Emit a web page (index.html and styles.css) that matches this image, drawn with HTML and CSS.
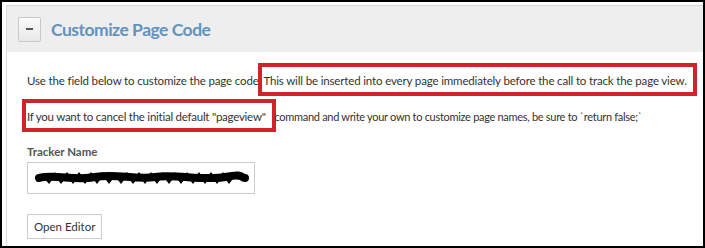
FILE: index.html
```html
<!DOCTYPE html>
<html lang="en">

<head>
    <meta charset="UTF-8">
    <title>Customize Page Code</title>
    <link rel="stylesheet" href="styles.css">
</head>

<body>
    <div class="frame">
        <div class="panel">
            <div class="panel-header">
                <button class="collapse" aria-label="Collapse"><span class="minus"></span></button>
                <h2>Customize Page Code</h2>
            </div>

            <div class="panel-body">
                <p class="note">Use the field below to customize the page code <span class="mark mark-first">This will be inserted into every page immediately before the call to track the page view.</span></p>
                <p class="note"><span class="mark mark-second">If you want to cancel the initial default "pageview"</span> <span class="tail">command and write your own to customize page names, be sure to `return false;`</span></p>

                <label for="tracker">Tracker Name</label>
                <div class="field" id="tracker">
                    <svg class="scribble" width="214" height="20" viewBox="0 0 214 20">
                        <path d="M4 10 C 20 6, 40 13, 60 9 S 100 12, 120 9 S 170 13, 190 9 S 205 10, 210 10" fill="none" stroke="#000" stroke-width="8" stroke-linecap="round" />
                        <path d="M8 7 l6 7 l6 -8 l6 8 l6 -8 l6 8 l6 -8 l6 8 l6 -8 l6 8 l6 -8 l6 8 l6 -8 l6 8 l6 -8 l6 8 l6 -8 l6 8 l6 -8 l6 8 l6 -8 l6 8 l6 -8 l6 8 l6 -8 l6 8 l6 -8 l6 8 l6 -8 l6 8 l6 -8 l6 8 l6 -8" fill="none" stroke="#000" stroke-width="2.5" />
                    </svg>
                </div>

                <button class="editor-btn">Open Editor</button>
            </div>
        </div>
    </div>
</body>

</html>
```

FILE: styles.css
```css
* {
    box-sizing: border-box;
}

body {
    margin: 0;
    background: #ffffff;
    font-family: 'Lato', 'Open Sans', sans-serif;
}

.frame {
    width: 705px;
    height: 248px;
    border: 2px solid #000000;
    padding: 3px 0 0 4px;
    overflow: hidden;
}

.panel {
    height: 100%;
    border-left: 1px solid #dcdcdc;
    border-top: 1px solid #d6d6d6;
}

.panel-header {
    height: 46px;
    background: #eeeeee;
    display: flex;
    align-items: center;
    padding-left: 11px;
    gap: 10px;
}

.collapse {
    width: 23px;
    height: 25px;
    border: 1px solid #c9c9c9;
    border-radius: 2px;
    background: linear-gradient(#fbfbfb, #e8e8e8);
    display: flex;
    align-items: center;
    justify-content: center;
    padding: 0;
}

.minus {
    width: 7px;
    height: 2px;
    background: #555555;
}

h2 {
    margin: 0;
    font-size: 17.5px;
    letter-spacing: -0.5px;
    font-weight: 700;
    color: #6193be;
}

.panel-body {
    padding: 19px 0 0 20px;
}

.note {
    margin: 0 0 16px;
    font-size: 11.5px;
    letter-spacing: -0.15px;
    line-height: 20px;
    white-space: nowrap;
    color: #333333;
}

.mark {
    border: 4px solid #d2232a;
    padding: 7px 6px 5px 1px;
}

.mark-first {
    margin-left: -3px;
}

.mark-second {
    margin-left: -5px;
    margin-right: -4px;
    letter-spacing: -0.25px;
}

.tail {
    font-size: 11px;
    letter-spacing: -0.3px;
}

label {
    display: block;
    margin-top: 17px;
    font-size: 11.5px;
    font-weight: 700;
    line-height: 16px;
    color: #555555;
}

.field {
    width: 228px;
    height: 32px;
    margin-top: 2px;
    border: 1px solid #cccccc;
    padding: 5px 0 0 7px;
}

.editor-btn {
    display: block;
    margin-top: 20px;
    height: 25px;
    padding: 0 6px;
    border: 1px solid #cccccc;
    background: #ffffff;
    font-family: 'Lato', 'Open Sans', sans-serif;
    font-size: 11.5px;
    color: #333333;
}
```
